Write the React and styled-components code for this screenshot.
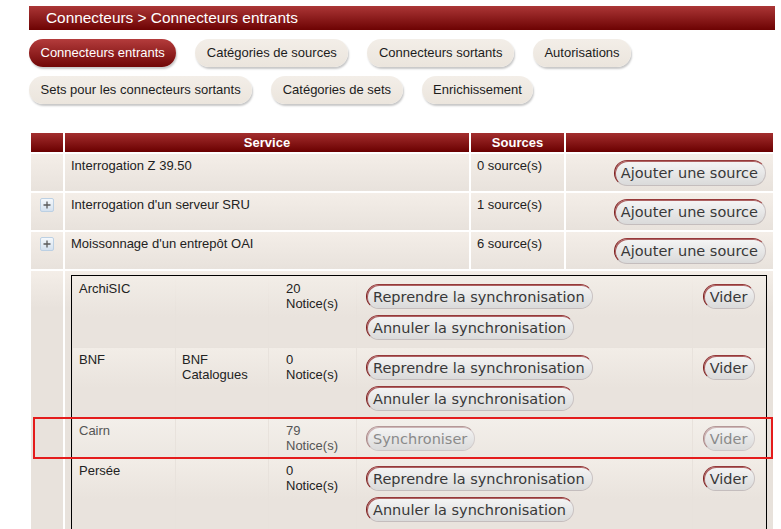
import styled, { createGlobalStyle } from 'styled-components';

const GlobalStyle = createGlobalStyle`
  html, body {
    margin: 0;
    padding: 0;
    overflow: hidden;
    background: #fff;
  }
  body {
    font-family: "Liberation Sans", Arial, sans-serif;
    font-size: 13px;
    color: #222;
  }
`;

const tabs = [
   { label: 'Connecteurs entrants', active: true },
   { label: 'Catégories de sources' },
   { label: 'Connecteurs sortants' },
   { label: 'Autorisations' },
   { label: 'Sets pour les connecteurs sortants' },
   { label: 'Catégories de sets' },
   { label: 'Enrichissement' },
];

const services = [
   { name: 'Interrogation Z 39.50', count: 0, expandable: false },
   { name: "Interrogation d'un serveur SRU", count: 1, expandable: true },
   { name: "Moissonnage d'un entrepôt OAI", count: 6, expandable: true },
];

const resync = ['Reprendre la synchronisation', 'Annuler la synchronisation'];

const sources = [
   { name: 'ArchiSIC', cat: '', count: 20, actions: resync },
   { name: 'BNF', cat: 'BNF Catalogues', count: 0, actions: resync },
   { name: 'Cairn', cat: '', count: 79, actions: ['Synchroniser'], idle: true },
   { name: 'Persée', cat: '', count: 0, actions: resync },
];

const PlusIcon = () => (
   <svg width='14' height='14' viewBox='0 0 14 14'>
      <defs>
         <linearGradient id='plusBg' x1='0' y1='0' x2='0' y2='1'>
            <stop offset='0' stopColor='#f6f9fc' />
            <stop offset='1' stopColor='#d3e0ee' />
         </linearGradient>
      </defs>
      <rect x='0.5' y='0.5' width='13' height='13' rx='1.5' fill='url(#plusBg)' stroke='#bcd0e3' />
      <path d='M7 3.5v7M3.5 7h7' stroke='#5a5a5a' strokeWidth='1.3' />
   </svg>
);

const App = () => {
   return (
      <Page>
         <GlobalStyle />
         <TitleBar>Connecteurs &gt; Connecteurs entrants</TitleBar>

         <Tabs>
            {tabs.map((t) => (
               <Tab key={t.label} $active={t.active}>
                  {t.label}
               </Tab>
            ))}
         </Tabs>

         <Table>
            <HeadCell />
            <HeadCell>Service</HeadCell>
            <HeadCell>Sources</HeadCell>
            <HeadCell />

            {services.map((s) => (
               <Row key={s.name}>
                  <IconCell>{s.expandable && <PlusIcon />}</IconCell>
                  <TextCell>{s.name}</TextCell>
                  <TextCell>{s.count} source(s)</TextCell>
                  <ActionCell>
                     <SysButton $tall>Ajouter une source</SysButton>
                  </ActionCell>
               </Row>
            ))}

            <IconCell />
            <NestedCell>
               <Inner>
                  {sources.map((src) => (
                     <InnerRow key={src.name} $idle={src.idle}>
                        <InnerText>{src.name}</InnerText>
                        <InnerText>{src.cat}</InnerText>
                        <InnerText />
                        <InnerText>
                           {src.count}
                           <br />
                           Notice(s)
                        </InnerText>
                        <ButtonStack>
                           {src.actions.map((a) => (
                              <SysButton key={a} disabled={src.idle}>
                                 {a}
                              </SysButton>
                           ))}
                        </ButtonStack>
                        <ClearCell>
                           <SysButton disabled={src.idle}>Vider</SysButton>
                        </ClearCell>
                        {src.idle && <Highlight />}
                     </InnerRow>
                  ))}
               </Inner>
            </NestedCell>
         </Table>
      </Page>
   );
};

export default App;

const Page = styled.div`
   padding: 6px 0 0 29px;
   width: 746px;
`;

const TitleBar = styled.h1`
   margin: 0;
   height: 24px;
   padding-left: 17px;
   background: linear-gradient(to bottom, #ab3636, #6d0303);
   color: #fff;
   font-size: 15.4px;
   font-weight: normal;
   line-height: 24px;
`;

const Tabs = styled.nav`
   display: flex;
   flex-wrap: wrap;
   gap: 9px 19px;
   margin-top: 9px;
`;

const Tab = styled.button`
   font: 13px/16px 'Liberation Sans', Arial, sans-serif;
   padding: 6px 11.5px;
   border: 0;
   border-radius: 14px;
   background: ${(p) =>
      p.$active
         ? 'linear-gradient(to bottom, #b43c3c, #700606)'
         : 'linear-gradient(to bottom, #f3eee8, #ebe5dd)'};
   color: ${(p) => (p.$active ? '#fff' : '#1c1c1c')};
   box-shadow: 1px 2px 2px rgba(0, 0, 0, 0.22);
`;

const Table = styled.div`
   margin-top: 27px;
   display: grid;
   grid-template-columns: 32px 404px 93px 207px;
   gap: 2px;
   padding: 2px;
`;

const Row = styled.div`
   display: contents;
`;

const cellBg = 'linear-gradient(to bottom, #f4eee8, #e8e2dc 37px, #e8e2dc)';

const HeadCell = styled.div`
   height: 19px;
   line-height: 19px;
   text-align: center;
   color: #fff;
   font-weight: bold;
   background: linear-gradient(to bottom, #a32e2e, #6a0000);
`;

const IconCell = styled.div`
   min-height: 37px;
   padding-top: 5px;
   box-sizing: border-box;
   display: flex;
   justify-content: center;
   align-items: flex-start;
   background: ${cellBg};
`;

const TextCell = styled.div`
   height: 37px;
   box-sizing: border-box;
   padding: 4px 6px;
   line-height: 15px;
   background: ${cellBg};
`;

const ActionCell = styled.div`
   height: 37px;
   box-sizing: border-box;
   padding: 0 7px;
   display: flex;
   align-items: center;
   justify-content: flex-end;
   background: ${cellBg};
`;

const NestedCell = styled.div`
   grid-column: span 3;
   padding: 4px 6px 0;
   background: ${cellBg};
`;

const Inner = styled.div`
   border: 1px solid #000;
   padding: 1px;
   display: flex;
   flex-direction: column;
   gap: 1px;
`;

const InnerRow = styled.div`
   position: relative;
   display: grid;
   grid-template-columns: 102px 92px 10px 76px 335px 72px;
   gap: 1px;
   color: ${(p) => (p.$idle ? '#555' : '#222')};

   & > div {
      background: ${(p) =>
         p.$idle
            ? 'linear-gradient(to bottom, #f3efea, #ece7e1)'
            : 'linear-gradient(to bottom, #f2ede7, #e9e3dd 40px, #e9e3dd)'};
   }
`;

const InnerText = styled.div`
   padding: 4px 6px;
   line-height: 15px;
`;

const ButtonStack = styled.div`
   padding: 7px 9px;
   display: flex;
   flex-direction: column;
   align-items: flex-start;
   gap: 6px;
`;

const ClearCell = styled.div`
   padding: 7px 0;
   display: flex;
   justify-content: center;
   align-items: flex-start;
`;

const SysButton = styled.button`
   height: ${(p) => (p.$tall ? '26px' : '25px')};
   box-sizing: border-box;
   padding: 0 7px 0 6px;
   font: 14.5px 'DejaVu Sans', sans-serif;
   color: #383838;
   border: 1px solid;
   border-color: #96393a #c9c2c2 #c4bdbd #7c1c1c;
   border-radius: 13px;
   background: linear-gradient(to bottom, #f5f5f5, #dadada);
   box-shadow: inset 1px 1px 0 rgba(150, 50, 50, 0.75);
   white-space: nowrap;

   &:disabled {
      color: #8a8a8a;
      border-color: #b49898 #d2cccc #cdc7c7 #a98585;
      box-shadow: inset 1px 1px 0 rgba(170, 120, 120, 0.5);
   }
`;

const Highlight = styled.span`
   position: absolute;
   top: -2px;
   bottom: -1px;
   left: -40px;
   right: -8px;
   border: 2px solid #e41c1c;
   pointer-events: none;
`;
